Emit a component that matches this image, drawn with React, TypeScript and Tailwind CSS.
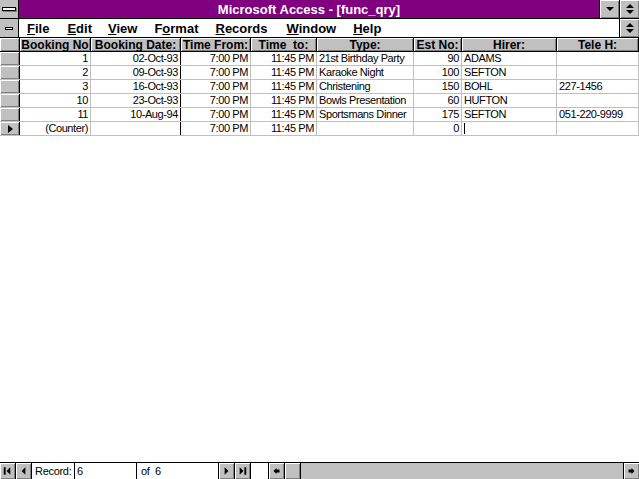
import React from 'react'

const COLS = [
  { key: 'no', label: 'Booking No', w: 'w-[71px]', align: 'right' },
  { key: 'date', label: 'Booking Date:', w: 'w-[90px]', align: 'right' },
  { key: 'from', label: 'Time From:', w: 'w-[70px]', align: 'right' },
  { key: 'to', label: 'Time  to:', w: 'w-[66px]', align: 'right' },
  { key: 'type', label: 'Type:', w: 'w-[97px]', align: 'left' },
  { key: 'est', label: 'Est No:', w: 'w-[48px]', align: 'right' },
  { key: 'hirer', label: 'Hirer:', w: 'w-[95px]', align: 'left' },
  { key: 'tele', label: 'Tele H:', w: 'flex-1', align: 'left' },
] as const

type Row = Record<string, string>

const ROWS: Row[] = [
  { no: '1', date: '02-Oct-93', from: '7:00 PM', to: '11:45 PM', type: '21st Birthday Party', est: '90', hirer: 'ADAMS', tele: '' },
  { no: '2', date: '09-Oct-93', from: '7:00 PM', to: '11:45 PM', type: 'Karaoke Night', est: '100', hirer: 'SEFTON', tele: '' },
  { no: '3', date: '16-Oct-93', from: '7:00 PM', to: '11:45 PM', type: 'Christening', est: '150', hirer: 'BOHL', tele: '227-1456' },
  { no: '10', date: '23-Oct-93', from: '7:00 PM', to: '11:45 PM', type: 'Bowls Presentation', est: '60', hirer: 'HUFTON', tele: '' },
  { no: '11', date: '10-Aug-94', from: '7:00 PM', to: '11:45 PM', type: 'Sportsmans Dinner', est: '175', hirer: 'SEFTON', tele: '051-220-9999' },
]

const NEW_ROW: Row = { no: '(Counter)', date: '', from: '7:00 PM', to: '11:45 PM', type: '', est: '0', hirer: '', tele: '' }

const bevel = 'shadow-[inset_1px_1px_0_#fff,inset_-1px_-1px_0_#808080]'

function CtlBtn({ children }: { children: React.ReactNode }) {
  return (
    <div className={`w-[20px] h-full bg-[#c0c0c0] border-l border-black flex items-center justify-center ${bevel}`}>
      {children}
    </div>
  )
}

function NavBtn({ d }: { d: React.ReactNode }) {
  return (
    <div className={`w-[16px] h-full bg-[#c0c0c0] border-r border-black flex items-center justify-center ${bevel}`}>
      <svg width="16" height="16" viewBox="0 0 16 16">{d}</svg>
    </div>
  )
}

function Cell({ col, value, last }: { col: typeof COLS[number]; value: string; last?: boolean }) {
  const border = col.key === 'date' ? 'border-black' : 'border-[#c0c0c0]'
  return (
    <div
      className={`${col.w} h-full shrink-0 border-r ${border} px-[2px] flex items-center overflow-hidden whitespace-nowrap ${
        col.align === 'right' ? 'justify-end' : 'justify-start'
      }`}
    >
      {value}
      {last && col.key === 'hirer' && <span className="w-[1px] h-[11px] bg-black" />}
    </div>
  )
}

const restoreIcon = (
  <svg width="10" height="12" viewBox="0 0 10 12">
    <polygon points="5,1 9,5 1,5" fill="#000" />
    <polygon points="1,7 9,7 5,11" fill="#000" />
  </svg>
)

export default function App() {
  return (
    <div className="w-[639px] h-[479px] flex flex-col bg-white overflow-hidden font-['Liberation_Sans',Arial,sans-serif] text-black select-none">
      {/* Title bar */}
      <div className="h-[19px] flex border-b border-black shrink-0">
        <div className="w-[19px] h-full bg-[#c0c0c0] border-r border-black flex items-center justify-center">
          <div className="w-[14px] h-[4px] bg-white border border-black shadow-[1px_1px_0_#808080]" />
        </div>
        <div className="flex-1 bg-[#800080] flex items-center justify-center text-white font-bold text-[13px] leading-none">
          Microsoft Access - [func_qry]
        </div>
        <CtlBtn>
          <svg width="10" height="6" viewBox="0 0 10 6"><polygon points="1,1 9,1 5,5" fill="#000" /></svg>
        </CtlBtn>
        <CtlBtn>{restoreIcon}</CtlBtn>
      </div>

      {/* Menu bar */}
      <div className="h-[19px] flex border-b border-black shrink-0 bg-white">
        <div className="w-[19px] h-full bg-[#c0c0c0] border-r border-black flex items-center justify-center">
          <div className="w-[8px] h-[3px] bg-white border border-black" />
        </div>
        <div className="flex-1 flex items-center text-[13px] font-bold leading-none">
          <span className="ml-[8px]"><u>F</u>ile</span>
          <span className="ml-[18px]"><u>E</u>dit</span>
          <span className="ml-[16px]"><u>V</u>iew</span>
          <span className="ml-[17px]">F<u>o</u>rmat</span>
          <span className="ml-[17px]"><u>R</u>ecords</span>
          <span className="ml-[19px]"><u>W</u>indow</span>
          <span className="ml-[17px]"><u>H</u>elp</span>
        </div>
        <CtlBtn>{restoreIcon}</CtlBtn>
      </div>

      {/* Datasheet */}
      <div className="flex-1 flex flex-col bg-white">
        <div className="h-[14px] flex border-b border-black bg-[#c0c0c0] text-[12px] font-bold leading-none">
          <div className={`w-[20px] h-full border-r border-black ${bevel}`} />
          {COLS.map(c => (
            <div
              key={c.key}
              className={`${c.w} h-full shrink-0 border-r border-black flex items-center justify-center whitespace-pre overflow-hidden ${bevel}`}
            >
              {c.label}
            </div>
          ))}
        </div>
        {[...ROWS, NEW_ROW].map((r, i) => {
          const isNew = i === ROWS.length
          return (
            <div key={i} className="h-[14px] flex border-b border-[#c0c0c0] text-[11px] tracking-[-0.4px] leading-none">
              <div className={`w-[20px] h-full bg-[#c0c0c0] border-r border-black flex items-center justify-center ${bevel}`}>
                {isNew && (
                  <svg width="8" height="10" viewBox="0 0 8 10"><polygon points="2,1 7,5 2,9" fill="#000" /></svg>
                )}
              </div>
              {COLS.map(c => (
                <Cell key={c.key} col={c} value={r[c.key]} last={isNew} />
              ))}
            </div>
          )
        })}
      </div>

      {/* Navigation / scroll bar */}
      <div className="h-[17px] flex border-t border-black shrink-0 bg-white text-[11px] tracking-[-0.3px] leading-none">
        <NavBtn d={<><rect x="4" y="4" width="2" height="8" fill="#000" /><polygon points="11,4 11,12 7,8" fill="#000" /></>} />
        <NavBtn d={<polygon points="10,4 10,12 6,8" fill="#000" />} />
        <div className="w-[42px] h-full flex items-center pl-[3px]">Record:</div>
        <div className="w-[62px] h-full border-l border-black flex items-center pl-[2px]">6</div>
        <div className="w-[82px] h-full border-l border-black flex items-center pl-[4px] whitespace-pre">of  6</div>
        <div className="h-full border-l border-black" />
        <NavBtn d={<polygon points="6,4 6,12 10,8" fill="#000" />} />
        <NavBtn d={<><polygon points="5,4 5,12 9,8" fill="#000" /><rect x="10" y="4" width="2" height="8" fill="#000" /></>} />
        <div className="w-[17px] h-full" />
        <div className="flex-1 h-full flex border-l border-black bg-[#c0c0c0]">
          <NavBtn d={<polygon points="4,8 8,4 8,6 12,6 12,10 8,10 8,12" fill="#000" transform="scale(0.8) translate(2,2)" />} />
          <div className={`w-[16px] h-full bg-[#c0c0c0] border-r border-black ${bevel}`} />
          <div className="flex-1 h-full" />
          <div className={`w-[16px] h-full bg-[#c0c0c0] border-l border-black flex items-center justify-center ${bevel}`}>
            <svg width="16" height="16" viewBox="0 0 16 16">
              <polygon points="12,8 8,4 8,6 4,6 4,10 8,10 8,12" fill="#000" transform="scale(0.8) translate(2,2)" />
            </svg>
          </div>
        </div>
      </div>
    </div>
  )
}
